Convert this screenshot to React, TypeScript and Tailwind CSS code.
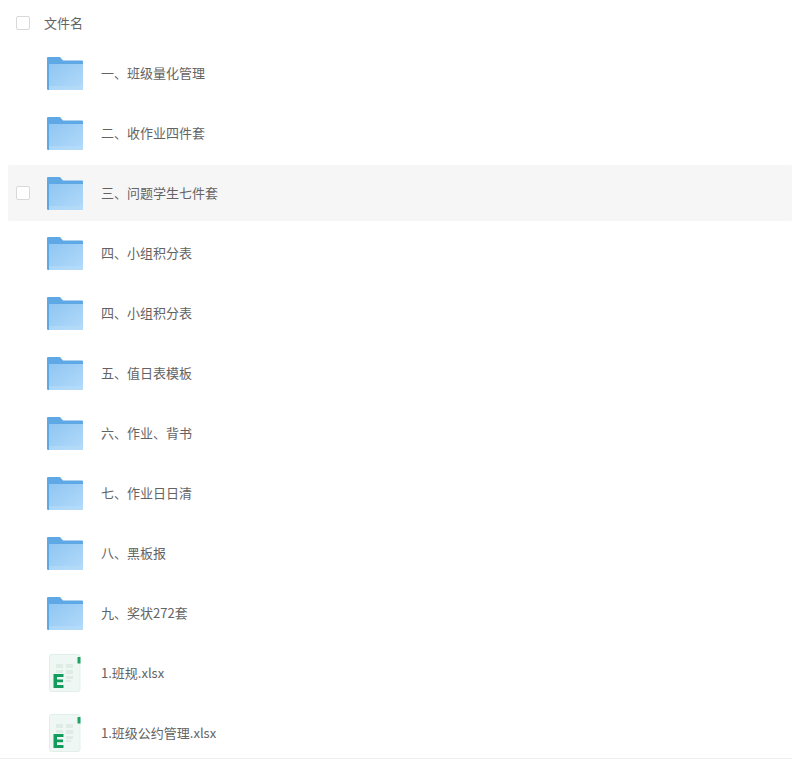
const rows = [
  { name: "一、班级量化管理", type: "folder" },
  { name: "二、收作业四件套", type: "folder" },
  { name: "三、问题学生七件套", type: "folder", hover: true },
  { name: "四、小组积分表", type: "folder" },
  { name: "四、小组积分表", type: "folder" },
  { name: "五、值日表模板", type: "folder" },
  { name: "六、作业、背书", type: "folder" },
  { name: "七、作业日日清", type: "folder" },
  { name: "八、黑板报", type: "folder" },
  { name: "九、奖状272套", type: "folder" },
  { name: "1.班规.xlsx", type: "xlsx" },
  { name: "1.班级公约管理.xlsx", type: "xlsx" },
];

function FolderIcon({ id }: { id: number }) {
  return (
    <svg width="36" height="33" viewBox="0 0 36 33" className="block">
      <defs>
        <linearGradient id={`f${id}`} x1="0" y1="0" x2="1" y2="1">
          <stop offset="0" stopColor="#8fc6f2" />
          <stop offset="1" stopColor="#b3dafa" />
        </linearGradient>
      </defs>
      <path d="M1 0h12l3 3.500h19a1 1 0 0 1 1 1V9H0V1a1 1 0 0 1 1-1z" fill="#5fa8e6" />
      <path d="M0 5h2v28H1a1 1 0 0 1-1-1z" fill="#5fa8e6" />
      <rect x="2" y="7" width="34" height="26" fill={`url(#f${id})`} />
      <rect x="2" y="29" width="34" height="4" fill="#b8dcf9" opacity="0.6" />
      <rect x="26" y="11" width="6" height="1" fill="#a3cff2" />
      <rect x="26" y="14" width="6" height="1" fill="#a3cff2" />
    </svg>
  );
}

function XlsxIcon() {
  return (
    <svg width="32" height="38" viewBox="0 0 32 38" className="block">
      <rect x="0.5" y="0.5" width="30.5" height="37" rx="2" fill="#eef7f3" stroke="#e2efe9" />
      <rect x="28.500" y="3" width="3" height="6.500" rx="0.5" fill="#1fa463" />
      <g fill="#dfece6">
        <rect x="7" y="10" width="7" height="4" />
        <rect x="17" y="10" width="7" height="4" />
        <rect x="7" y="16" width="7" height="3" />
        <rect x="17" y="16" width="7" height="4" />
        <rect x="17" y="22" width="7" height="3" />
        <rect x="17" y="26" width="5" height="2" />
      </g>
      <path d="M4.500 20h10v3H8v2.500h6v2.800H8v2.700H14.500V34h-10z" fill="#129c5b" />
    </svg>
  );
}

function Checkbox() {
  return <span className="block w-[14px] h-[14px] rounded-[2px] border border-[#d9d9d9] bg-white" />;
}

export default function App() {
  return (
    <div
      className="w-[792px] h-[762px] overflow-hidden bg-white text-[13px] text-[#636363]"
      style={{ fontFamily: '"Noto Sans CJK SC", "Noto Sans", sans-serif' }}
    >
      {/* Header */}
      <div className="flex items-center h-[43px] pt-[3px] pl-4">
        <Checkbox />
        <span className="ml-[14px]">文件名</span>
      </div>

      {/* Rows */}
      <div className="flex flex-col gap-1 pt-[2px] pl-2 border-b border-[#eeeeee] h-[716px] overflow-hidden">
        {rows.map((row, i) => (
          <div
            key={i}
            className={`flex items-center shrink-0 h-14 pl-2 rounded-[2px] ${row.hover ? "bg-[#f6f6f6]" : ""}`}
          >
            <span className="w-[14px]">{row.hover && <Checkbox />}</span>
            <span className="w-[71px] flex justify-start pl-[17px]">
              {row.type === "folder" ? (
                <FolderIcon id={i} />
              ) : (
                <span className="pl-[2px]">
                  <XlsxIcon />
                </span>
              )}
            </span>
            <span>{row.name}</span>
          </div>
        ))}
      </div>
    </div>
  );
}
